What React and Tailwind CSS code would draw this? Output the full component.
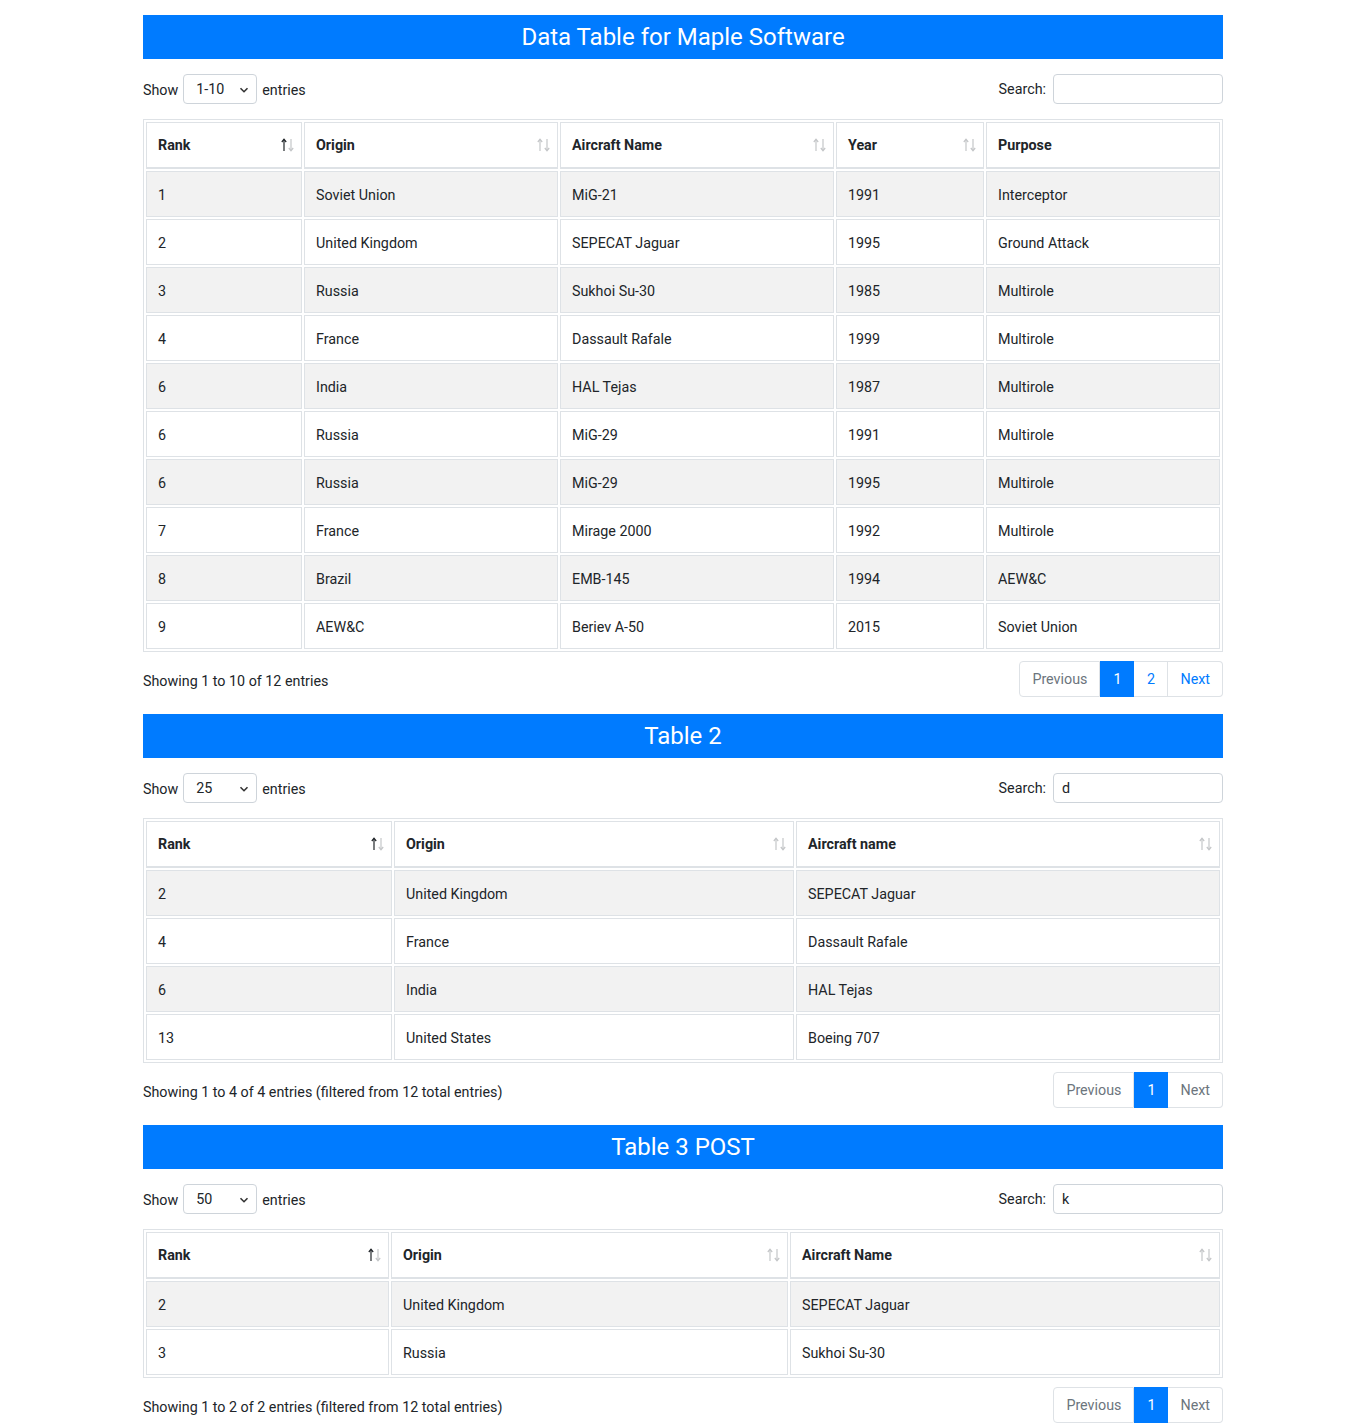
import React from "react";

const t1 = {
  title: "Data Table for Maple Software",
  show: "1-10",
  search: "",
  cols: [
    { name: "Rank", w: "w-[156px]", sort: "asc" },
    { name: "Origin", w: "w-[254px]", sort: "none" },
    { name: "Aircraft Name", w: "w-[274px]", sort: "none" },
    { name: "Year", w: "w-[148px]", sort: "none" },
    { name: "Purpose", w: "w-[234px]", sort: null },
  ],
  rows: [
    ["1", "Soviet Union", "MiG-21", "1991", "Interceptor"],
    ["2", "United Kingdom", "SEPECAT Jaguar", "1995", "Ground Attack"],
    ["3", "Russia", "Sukhoi Su-30", "1985", "Multirole"],
    ["4", "France", "Dassault Rafale", "1999", "Multirole"],
    ["6", "India", "HAL Tejas", "1987", "Multirole"],
    ["6", "Russia", "MiG-29", "1991", "Multirole"],
    ["6", "Russia", "MiG-29", "1995", "Multirole"],
    ["7", "France", "Mirage 2000", "1992", "Multirole"],
    ["8", "Brazil", "EMB-145", "1994", "AEW&C"],
    ["9", "AEW&C", "Beriev A-50", "2015", "Soviet Union"],
  ],
  info: "Showing 1 to 10 of 12 entries",
  pages: ["1", "2"],
  nextEnabled: true,
};

const t2 = {
  title: "Table 2",
  show: "25",
  search: "d",
  cols: [
    { name: "Rank", w: "w-[246px]", sort: "asc" },
    { name: "Origin", w: "w-[400px]", sort: "none" },
    { name: "Aircraft name", w: "w-[424px]", sort: "none" },
  ],
  rows: [
    ["2", "United Kingdom", "SEPECAT Jaguar"],
    ["4", "France", "Dassault Rafale"],
    ["6", "India", "HAL Tejas"],
    ["13", "United States", "Boeing 707"],
  ],
  info: "Showing 1 to 4 of 4 entries (filtered from 12 total entries)",
  pages: ["1"],
  nextEnabled: false,
};

const t3 = {
  title: "Table 3 POST",
  show: "50",
  search: "k",
  cols: [
    { name: "Rank", w: "w-[243px]", sort: "asc" },
    { name: "Origin", w: "w-[397px]", sort: "none" },
    { name: "Aircraft Name", w: "w-[430px]", sort: "none" },
  ],
  rows: [
    ["2", "United Kingdom", "SEPECAT Jaguar"],
    ["3", "Russia", "Sukhoi Su-30"],
  ],
  info: "Showing 1 to 2 of 2 entries (filtered from 12 total entries)",
  pages: ["1"],
  nextEnabled: false,
};

function SortIcon({ sort }) {
  if (!sort) return null;
  const up = sort === "asc" ? "#212529" : "#c4c6c8";
  const down = "#c4c6c8";
  return (
    <svg
      className="absolute right-[6px] top-1/2 -translate-y-1/2"
      width="14"
      height="14"
      viewBox="0 0 14 14"
    >
      <path d="M3 1.5 V13" stroke={up} strokeWidth="1.2" fill="none" />
      <path d="M0.8 4 L3 1.3 L5.2 4" stroke={up} strokeWidth="1.2" fill="none" />
      <path d="M10 1 V12.5" stroke={down} strokeWidth="1.2" fill="none" />
      <path d="M7.8 10 L10 12.7 L12.2 10" stroke={down} strokeWidth="1.2" fill="none" />
    </svg>
  );
}

function Section({ d, first }) {
  return (
    <div className={first ? "" : "mt-[17px]"}>
      <div className="h-[44px] bg-[#007bff] text-white text-[24px] leading-[44px] text-center">
        {d.title}
      </div>
      <div className="mt-[15px] h-[30px] flex items-center justify-between text-[14.3px]">
        <div className="flex items-center">
          <span className="pt-[3px]">Show</span>
          <div className="ml-[5px] w-[74px] h-[30px] border border-[#ced4da] rounded-[4px] bg-white flex items-center justify-between pl-[12px] pr-[7px] pt-[2px]">
            <span>{d.show}</span>
            <svg width="10" height="10" viewBox="0 0 10 10">
              <path d="M1.5 3.2 L5 6.7 L8.5 3.2" fill="none" stroke="#333" strokeWidth="1.6" />
            </svg>
          </div>
          <span className="ml-[5px] pt-[3px]">entries</span>
        </div>
        <div className="flex items-center">
          <span className="pt-[2px]">Search:</span>
          <div className="ml-[7px] w-[170px] h-[30px] border border-[#ced4da] rounded-[4px] bg-white flex items-center px-[8px] pt-[2px]">
            {d.search}
          </div>
        </div>
      </div>
      <table className="mt-[15px] w-full table-fixed border-separate border-spacing-[2px] border border-[#dee2e6] text-[14.3px]">
        <thead>
          <tr>
            {d.cols.map((c, i) => (
              <th
                key={i}
                className={`${c.w} relative text-left font-bold border border-b-2 border-[#dee2e6] pl-[11px] pr-[30px] pt-[12px] pb-[12px] leading-[20px]`}
              >
                {c.name}
                <SortIcon sort={c.sort} />
              </th>
            ))}
          </tr>
        </thead>
        <tbody>
          {d.rows.map((r, ri) => (
            <tr key={ri}>
              {r.map((v, ci) => (
                <td
                  key={ci}
                  className={`border border-[#dee2e6] pl-[11px] pr-[12px] pt-[13px] pb-[11px] leading-[20px] ${
                    ri % 2 === 0 ? "bg-[#f2f2f2]" : "bg-white"
                  }`}
                >
                  {v}
                </td>
              ))}
            </tr>
          ))}
        </tbody>
      </table>
      <div className="mt-[9px] h-[36px] flex items-center justify-between text-[14.3px]">
        <div className="pt-[6px]">{d.info}</div>
        <div className="flex h-[36px]">
          <div className="h-[36px] px-[12px] pt-[2px] flex items-center border border-[#dee2e6] rounded-l-[4px] text-[#6c757d] bg-white">
            Previous
          </div>
          {d.pages.map((p, i) => (
            <div
              key={i}
              className={`h-[36px] w-[34px] pt-[2px] flex items-center justify-center ${
                i === 0
                  ? "bg-[#007bff] text-white border border-[#007bff]"
                  : "bg-white text-[#007bff] border border-l-0 border-[#dee2e6]"
              }`}
            >
              {p}
            </div>
          ))}
          <div
            className={`h-[36px] px-[12px] pt-[2px] flex items-center border border-l-0 border-[#dee2e6] rounded-r-[4px] bg-white ${
              d.nextEnabled ? "text-[#007bff]" : "text-[#6c757d]"
            }`}
          >
            Next
          </div>
        </div>
      </div>
    </div>
  );
}

export default function App() {
  return (
    <div
      className="min-h-[1425px] bg-white text-[#212529]"
      style={{ fontFamily: "Roboto, 'Liberation Sans', Arial, sans-serif" }}
    >
      <div className="w-[1080px] mx-auto pt-[15px] pb-[2px]">
        <Section d={t1} first />
        <Section d={t2} />
        <Section d={t3} />
      </div>
    </div>
  );
}
